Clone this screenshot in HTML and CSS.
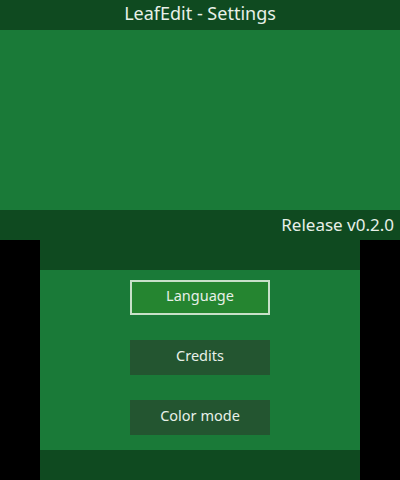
FILE: index.html
```html
<!DOCTYPE html>
<html>
<head>
<meta charset="utf-8">
<link rel="stylesheet" href="styles.css">
</head>
<body>
<div class="top-screen">
  <div class="bar title-bar">LeafEdit - Settings</div>
  <div class="top-body"></div>
  <div class="bar version-bar">Release v0.2.0</div>
</div>
<div class="bottom-row">
  <div class="bottom-screen">
    <div class="bar"></div>
    <div class="bottom-body">
      <div class="btn selected">Language</div>
      <div class="btn">Credits</div>
      <div class="btn">Color mode</div>
    </div>
    <div class="bar"></div>
  </div>
</div>
</body>
</html>
```
FILE: styles.css
```css
html, body {
  margin: 0;
  padding: 0;
  background: #000;
  width: 400px;
  height: 480px;
  overflow: hidden;
  font-family: "Noto Sans", "DejaVu Sans", sans-serif;
  color: #e8f0e8;
}
.top-screen {
  width: 400px;
  height: 240px;
  display: flex;
  flex-direction: column;
  background: #1a7a38;
}
.bar {
  height: 30px;
  background: #0f4a20;
  flex: none;
}
.title-bar {
  display: flex;
  align-items: center;
  justify-content: center;
  font-size: 18px;
  line-height: 1;
  padding-bottom: 5px;
  box-sizing: border-box;
}
.top-body {
  flex: 1;
}
.version-bar {
  display: flex;
  align-items: center;
  justify-content: flex-end;
  padding-right: 6px;
  font-size: 17px;
  line-height: 1;
  padding-bottom: 2px;
  box-sizing: border-box;
}
.bottom-row {
  display: flex;
  justify-content: center;
  height: 240px;
}
.bottom-screen {
  width: 320px;
  display: flex;
  flex-direction: column;
  background: #1a7a38;
}
.bottom-body {
  flex: 1;
  display: flex;
  flex-direction: column;
  align-items: center;
  padding-top: 10px;
  gap: 25px;
}
.btn {
  width: 140px;
  height: 35px;
  box-sizing: border-box;
  background: #235530;
  display: flex;
  align-items: center;
  justify-content: center;
  font-size: 14.5px;
  line-height: 1;
  padding-bottom: 4px;
}
.btn.selected {
  background: #258530;
  border: 2px solid #c8e0c8;
}
```
